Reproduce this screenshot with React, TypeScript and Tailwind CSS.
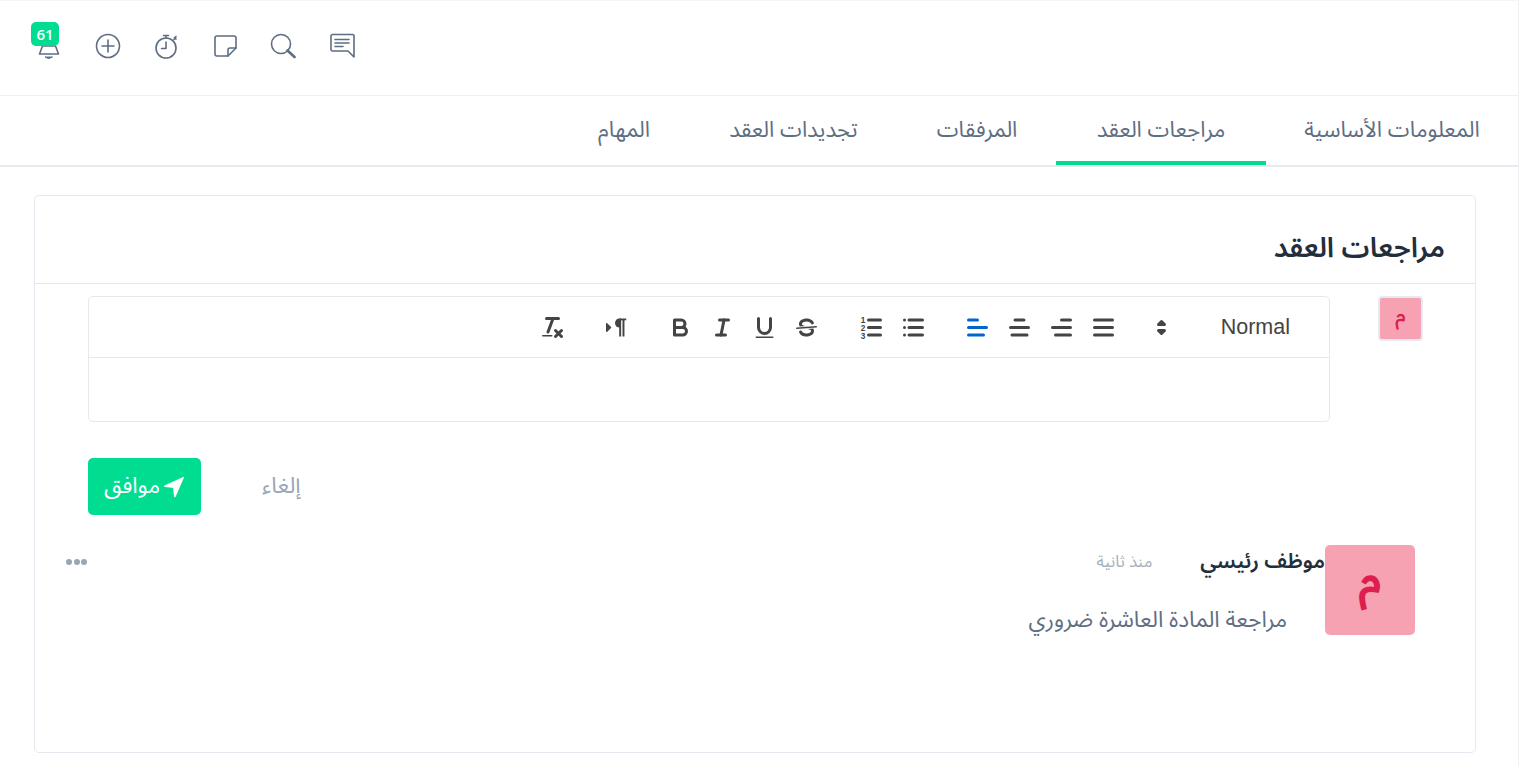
import type { ReactNode } from 'react';

const tabs = [
  { label: 'المعلومات الأساسية', width: 'w-[252px]' },
  { label: 'مراجعات العقد', width: 'w-[210px]' },
  { label: 'المرفقات', width: 'w-[158px]' },
  { label: 'تجديدات العقد', width: 'w-[209px]' },
  { label: 'المهام', width: 'w-[130px]' },
];

function QuillIcon({ children, active }: { children: ReactNode; active?: boolean }) {
  return (
    <button type="button" dir="ltr" className="flex h-[42px] w-[42px] items-center justify-center">
      <svg
        viewBox="0 0 18 18"
        className={`h-[27px] w-[27px] ${active ? 'text-[#0066cc]' : 'text-[#444444]'}`}
        fill="none"
        stroke="currentColor"
        strokeWidth="2"
        strokeLinecap="round"
        strokeLinejoin="round"
      >
        {children}
      </svg>
    </button>
  );
}

function Lines({ rows }: { rows: number[][] }) {
  return (
    <>
      {rows.map(([x1, x2, y]) => (
        <line key={`${x1}-${y}`} x1={x1} x2={x2} y1={y} y2={y} />
      ))}
    </>
  );
}

function HeaderIcon({ children }: { children: ReactNode }) {
  return (
    <svg
      viewBox="0 0 26 26"
      className="h-[26px] w-[26px] text-[#5e6e82]"
      fill="none"
      stroke="currentColor"
      strokeWidth="1.6"
      strokeLinecap="round"
      strokeLinejoin="round"
    >
      {children}
    </svg>
  );
}

function Toolbar() {
  return (
    <div className="flex h-[61px] items-center border-b border-[#e4e9f0]">
      <div className="flex h-[42px] w-[205px] items-center justify-between pr-[39px] pl-[24px]">
        <span dir="ltr" className="font-['Liberation_Sans',sans-serif] text-[21.5px] text-[#444444]">Normal</span>
        <svg viewBox="0 0 18 18" className="h-[27px] w-[27px] text-[#444444]" fill="currentColor" stroke="currentColor" strokeWidth="2" strokeLinejoin="round">
          <polygon points="7 11 9 13 11 11" />
          <polygon points="7 7 9 5 11 7" />
        </svg>
      </div>
      <div className="flex">
        <div className="flex">
          <QuillIcon><Lines rows={[[3, 15, 4], [3, 15, 9], [3, 15, 14]]} /></QuillIcon>
          <QuillIcon><Lines rows={[[9, 15, 4], [3, 15, 9], [5, 15, 14]]} /></QuillIcon>
          <QuillIcon><Lines rows={[[6, 12, 4], [3, 15, 9], [4, 14, 14]]} /></QuillIcon>
          <QuillIcon active><Lines rows={[[3, 9, 4], [3, 15, 9], [3, 13, 14]]} /></QuillIcon>
        </div>
        <div className="mr-[22px] flex">
          <QuillIcon>
            <Lines rows={[[6, 15, 4], [6, 15, 9], [6, 15, 14], [3, 3, 4], [3, 3, 9], [3, 3, 14]]} />
          </QuillIcon>
          <QuillIcon>
            <Lines rows={[[7, 15, 4], [7, 15, 9], [7, 15, 14]]} />
            <g stroke="none" fill="currentColor" fontFamily="Liberation Sans, sans-serif" fontSize="5.5" fontWeight="700">
              <text x="1.800" y="6">1</text>
              <text x="1.800" y="11.200">2</text>
              <text x="1.800" y="16.400">3</text>
            </g>
          </QuillIcon>
        </div>
        <div className="mr-[23px] flex">
          <QuillIcon>
            <line x1="15.5" x2="2.5" y1="8.5" y2="9.5" strokeWidth="1" />
            <g stroke="none" fill="currentColor">
              <path d="M9.007,8C6.542,7.791,6,7.519,6,6.5,6,5.792,7.283,5,9,5c1.571,0,2.765.679,2.969,1.309a1,1,0,0,0,1.9-.617C13.356,4.106,11.354,3,9,3,6.2,3,4,4.538,4,6.5a3.2,3.2,0,0,0,.5,1.843Z" />
              <path d="M8.984,10C11.457,10.208,12,10.479,12,11.5c0,.708-1.283,1.5-3,1.5-1.571,0-2.765-.679-2.969-1.309a1,1,0,1,0-1.9.617C4.644,13.894,6.646,15,9,15c2.8,0,5-1.538,5-3.5a3.2,3.2,0,0,0-.5-1.843Z" />
            </g>
          </QuillIcon>
          <QuillIcon>
            <path d="M5,3V9a4.012,4.012,0,0,0,4,4H9a4.012,4.012,0,0,0,4-4V3" />
            <rect x="3" y="15" width="12" height="1" rx="0.5" fill="currentColor" stroke="none" />
          </QuillIcon>
          <QuillIcon>
            <line x1="7" x2="13" y1="4" y2="4" />
            <line x1="5" x2="11" y1="14" y2="14" />
            <line x1="8" x2="10" y1="14" y2="4" />
          </QuillIcon>
          <QuillIcon>
            <path d="M5,4H9.5A2.5,2.5,0,0,1,12,6.5v0A2.5,2.5,0,0,1,9.5,9H5A0,0,0,0,1,5,9V4A0,0,0,0,1,5,4Z" />
            <path d="M5,9h5.5A2.5,2.5,0,0,1,13,11.5v0A2.5,2.5,0,0,1,10.5,14H5a0,0,0,0,1,0,0V9A0,0,0,0,1,5,9Z" />
          </QuillIcon>
        </div>
        <div className="mr-[22px]">
          <QuillIcon>
            <polygon points="2.500 11.500 5 9 2.500 6.500" fill="currentColor" strokeWidth="1" />
            <g stroke="none" fill="currentColor">
              <path d="M11,3a3,3,0,0,0,0,6h1V3H11Z" />
              <rect x="10.800" y="4" width="1.300" height="11" />
              <rect x="13" y="4" width="1.300" height="11" />
              <rect x="11" y="3" width="4.500" height="1.200" />
            </g>
          </QuillIcon>
        </div>
        <div className="mr-[22px]">
          <QuillIcon>
            <line x1="5" x2="13" y1="3" y2="3" />
            <line x1="6" x2="9.35" y1="12" y2="3" />
            <line x1="11" x2="15" y1="11" y2="15" />
            <line x1="15" x2="11" y1="11" y2="15" />
            <rect x="2" y="14" width="7" height="1" rx="0.5" fill="currentColor" stroke="none" />
          </QuillIcon>
        </div>
      </div>
    </div>
  );
}

export default function App() {
  return (
    <div className="h-[766px] w-[1525px] overflow-hidden bg-white">
      <div dir="rtl" className="h-[766px] w-[1519px] border-r border-r-[#edf0f5] font-['Noto_Sans_Arabic','DejaVu_Sans',sans-serif]">
        {/* Top bar */}
        <header dir="ltr" className="flex h-[96px] items-center gap-[32.5px] border-t border-b border-t-[#f9f3f6] border-b-[#edf0f5] pb-[4px] pl-[36px]">
          <div className="relative">
            <HeaderIcon>
              <path d="M6.500 13h13l3 8H3.500z" />
              <path d="M9.500 24h7l-3.500 1.500z" fill="currentColor" strokeWidth="1" />
            </HeaderIcon>
            <span className="absolute top-[-11px] left-[-5px] flex h-[24px] w-[28px] items-center justify-center rounded-[5px] bg-[#00dd91] font-['Open_Sans',sans-serif] text-[15px] font-semibold text-white">61</span>
          </div>
          <HeaderIcon>
            <circle cx="13" cy="13" r="11.5" />
            <path d="M13 7v12M7 13h12" />
          </HeaderIcon>
          <HeaderIcon>
            <circle cx="13" cy="15" r="10" />
            <path d="M13 9v6.500H8.500M10.500 2.500h5M13 2.500v2.500M21.500 4.500l1.500 1.500M23 3.500l-2 3" />
          </HeaderIcon>
          <HeaderIcon>
            <path d="M16 23H5a2 2 0 0 1-2-2V5a2 2 0 0 1 2-2h17a2 2 0 0 1 2 2v10z" />
            <path d="M24 15h-6a2 2 0 0 0-2 2v6" />
          </HeaderIcon>
          <HeaderIcon>
            <circle cx="11" cy="11" r="9.500" />
            <path d="M17.500 17.500l7 6.500" strokeWidth="2.600" />
          </HeaderIcon>
          <HeaderIcon>
            <path d="M3.500 1.500h20a1.500 1.500 0 0 1 1.500 1.500v21l-6-6H3.500A1.500 1.500 0 0 1 2 16.500V3a1.500 1.500 0 0 1 1.500-1.500z" />
            <path d="M6 6.500h14M6 10h14M6 13.500h8" />
          </HeaderIcon>
        </header>

        {/* Tabs */}
        <nav className="flex h-[71px] border-b-2 border-[#e7ebf1]">
          {tabs.map((tab, i) => (
            <div
              key={tab.label}
              className={`flex items-center justify-center border-b-[4px] pt-[4px] text-[22px] text-[#5e6e82] ${tab.width} ${i === 1 ? 'border-[#00dd91]' : 'border-transparent'}`}
            >
              {tab.label}
            </div>
          ))}
        </nav>

        {/* Card */}
        <section className="mt-[28px] mr-[42px] ml-[34px] flex h-[558px] flex-col rounded-[5px] border border-[#e4e9f0]">
          <div className="flex h-[88px] shrink-0 items-center border-b border-[#e4e9f0] px-[30px] pt-[18px]">
            <h2 className="text-[28px] font-semibold text-[#232e3c]">مراجعات العقد</h2>
          </div>

          <div className="flex gap-[48px] pt-[12px] pr-[52px]">
            <div className="flex h-[45px] w-[45px] shrink-0 items-center justify-center rounded-[4px] border-2 border-[#e7ebf1] bg-[#f6a2b3] pb-[6px] text-[20px] font-semibold text-[#dc1f4e]">م</div>
            <div className="w-[1242px]">
              <div className="h-[126px] rounded-[5px] border border-[#e4e9f0]">
                <Toolbar />
              </div>
              <div className="mt-[36px] flex items-center justify-end gap-[61px]">
                <button type="button" className="text-[22.5px] text-[#9aa5b5]">إلغاء</button>
                <button type="button" className="flex h-[57px] w-[113px] items-center justify-center gap-[3px] rounded-[5px] bg-[#00dd91] text-[22.5px] text-white">
                  <svg viewBox="0 0 22 22" className="h-[22px] w-[22px]" fill="currentColor">
                    <path d="M21 1.500a.6.6 0 0 0-.800-.600L1.500 9.500c-.8.400-.6 1.500.3 1.600l7.500.7a1 1 0 0 1 .9.900l.8 7.800c.1.900 1.300 1.100 1.600.3z" />
                  </svg>
                  موافق
                </button>
              </div>
            </div>
          </div>

          {/* Comment */}
          <div className="mt-[30px] flex pr-[60px] pl-[31px]">
            <div className="flex h-[90px] w-[90px] shrink-0 items-center justify-center rounded-[5px] bg-[#f6a2b3] pb-[20px] text-[42px] font-bold text-[#dc1f4e]">م</div>
            <div className="flex-1">
              <div className="flex h-[34px] items-center">
                <span className="text-[21px] font-semibold text-[#232e3c]">موظف رئيسي</span>
                <span className="mr-[48px] text-[16.5px] text-[#a6afbc]">منذ ثانية</span>
                <span className="mr-auto flex gap-[1.5px]">
                  <i className="h-[6px] w-[6px] rounded-full bg-[#9aa5b5]" />
                  <i className="h-[6px] w-[6px] rounded-full bg-[#9aa5b5]" />
                  <i className="h-[6px] w-[6px] rounded-full bg-[#9aa5b5]" />
                </span>
              </div>
              <p className="mt-[25px] pr-[38px] text-[22.5px] text-[#5e6e82]">مراجعة المادة العاشرة ضروري</p>
            </div>
          </div>
        </section>
      </div>
    </div>
  );
}
